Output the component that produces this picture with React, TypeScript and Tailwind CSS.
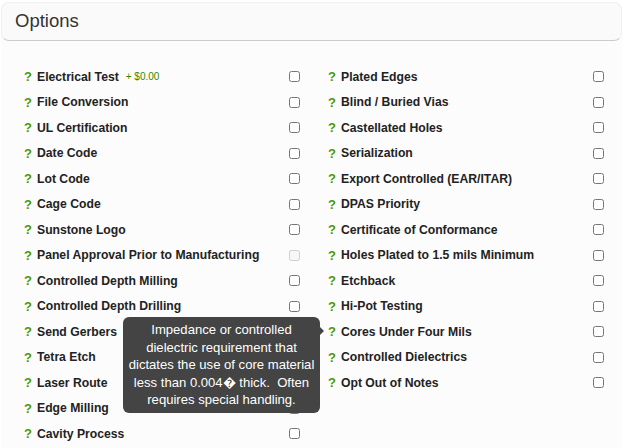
import React from 'react';

const leftOptions = [
  'Electrical Test',
  'File Conversion',
  'UL Certification',
  'Date Code',
  'Lot Code',
  'Cage Code',
  'Sunstone Logo',
  'Panel Approval Prior to Manufacturing',
  'Controlled Depth Milling',
  'Controlled Depth Drilling',
  'Send Gerbers',
  'Tetra Etch',
  'Laser Route',
  'Edge Milling',
  'Cavity Process',
];

const rightOptions = [
  'Plated Edges',
  'Blind / Buried Vias',
  'Castellated Holes',
  'Serialization',
  'Export Controlled (EAR/ITAR)',
  'DPAS Priority',
  'Certificate of Conformance',
  'Holes Plated to 1.5 mils Minimum',
  'Etchback',
  'Hi-Pot Testing',
  'Cores Under Four Mils',
  'Controlled Dielectrics',
  'Opt Out of Notes',
];

const OptionRow: React.FC<{ label: string }> = ({ label }) => (
  <div className="flex h-[25.5px] items-center">
    <span className="w-[13px] text-[13px] font-bold text-[#4c9a00]">?</span>
    <span className="text-[12.2px] font-bold text-[#222]">{label}</span>
    {label === 'Electrical Test' && (
      <span className="ml-[7px] text-[10px] text-[#2e8b00]">+ $0.00</span>
    )}
    <input
      type="checkbox"
      disabled={label === 'Panel Approval Prior to Manufacturing'}
      className="ml-auto h-[11px] w-[11px]"
    />
  </div>
);

export default function App() {
  return (
    <div className="h-[448px] w-[624px] overflow-hidden bg-white font-['Liberation_Sans',Arial,sans-serif]">
      <div className="ml-px mt-[2px] h-[446px] w-[621px] rounded-t-[8px] bg-[#fcfcfc]">
        <div className="h-[39px] rounded-[8px] border border-t-[#f0f0f0] border-x-[#f0f0f0] border-b-[#ccc] bg-[#fafafa] pl-[13px] pt-[7px] text-[18.5px] leading-[22px] text-[#333]">
          Options
        </div>
        <div className="relative grid grid-cols-[276px_276px] gap-x-[28px] pl-[23px] pt-[23px]">
          <div>
            {leftOptions.map(o => (
              <OptionRow key={o} label={o} />
            ))}
          </div>
          <div>
            {rightOptions.map(o => (
              <OptionRow key={o} label={o} />
            ))}
          </div>
          <div className="absolute left-[122px] top-[276px] w-[197px] rounded-[6px] bg-[#444] px-[3px] py-[4px] text-center text-[13.1px] leading-[17.5px] text-white">
            Impedance or controlled dielectric requirement that dictates the use of core material less than 0.004� thick.&nbsp; Often requires special handling.
            <div className="absolute right-[-4px] top-[10px] h-0 w-0 border-y-[4px] border-l-[4px] border-y-transparent border-l-[#444]" />
          </div>
        </div>
      </div>
    </div>
  );
}
